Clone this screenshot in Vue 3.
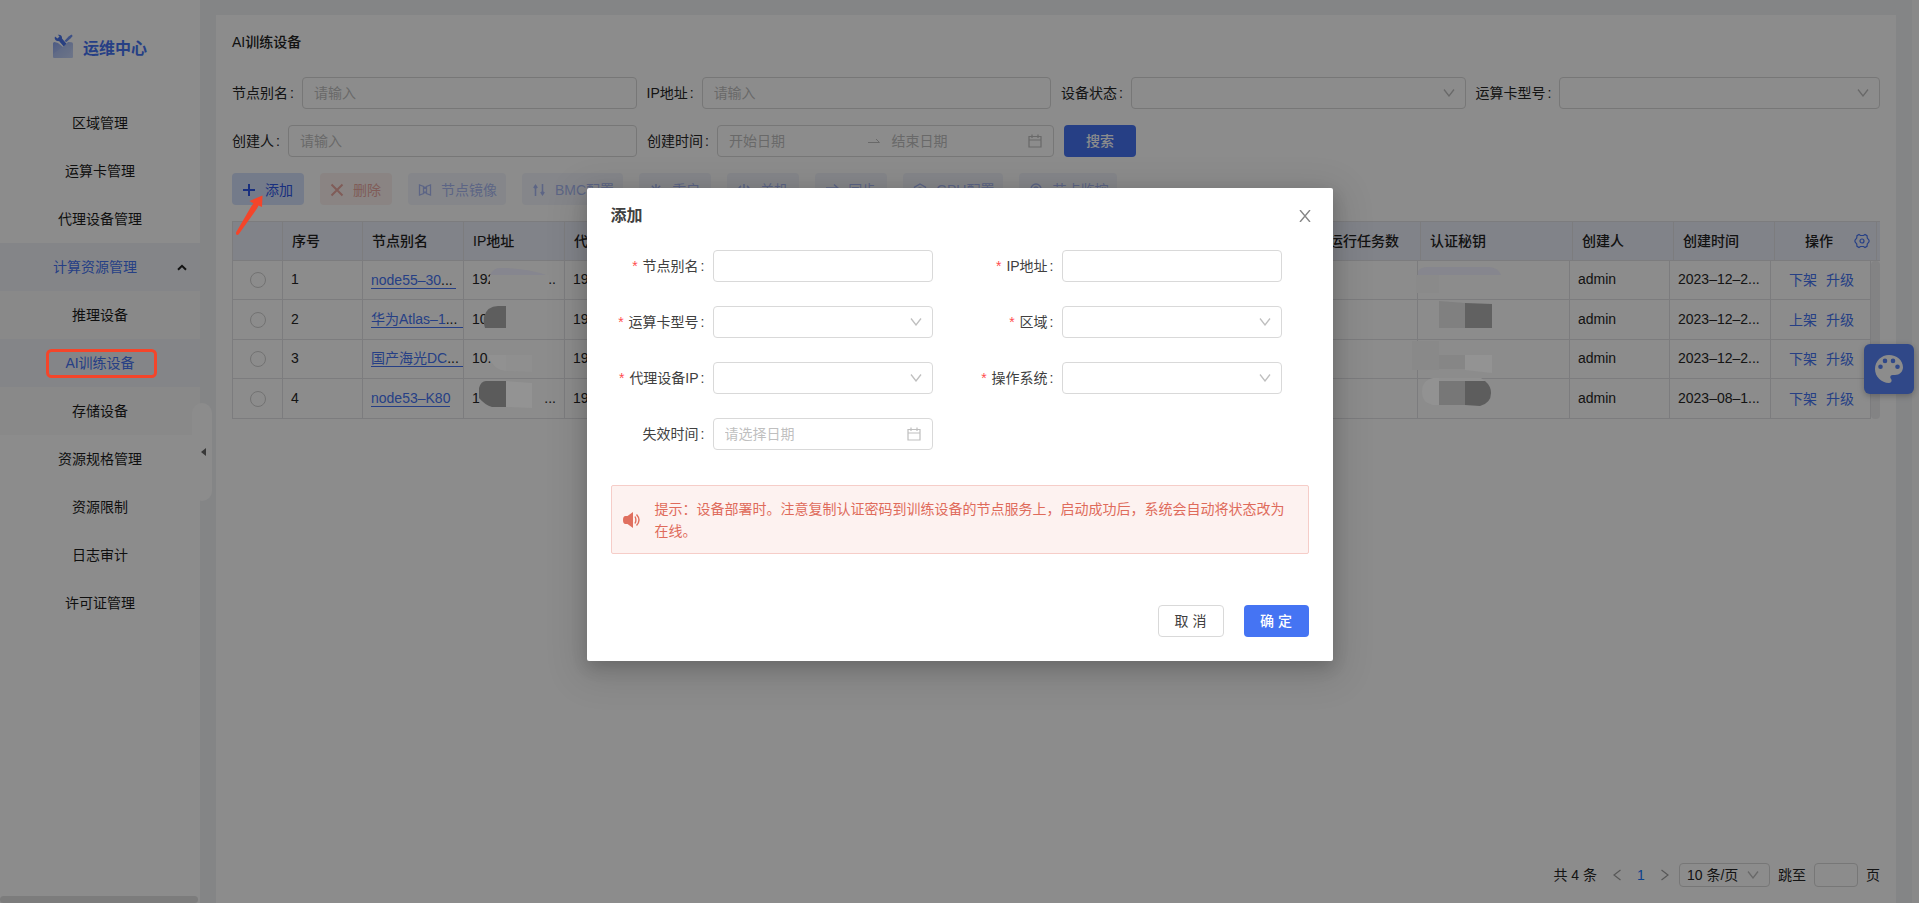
<script setup>
const menu = [
  { label: '区域管理' },
  { label: '运算卡管理' },
  { label: '代理设备管理' },
  { label: '计算资源管理', kind: 'parent' },
  { label: '推理设备', kind: 'child' },
  { label: 'AI训练设备', kind: 'child active' },
  { label: '存储设备', kind: 'child' },
  { label: '资源规格管理' },
  { label: '资源限制' },
  { label: '日志审计' },
  { label: '许可证管理' },
]

const actions = [
  { label: '添加', kind: 'add', d: 'M7 1v12M1 7h12', w: 2 },
  { label: '删除', kind: 'del', d: 'M1.5 1.5l11 11M12.5 1.5l-11 11', w: 2 },
  { label: '节点镜像', kind: 'off', d: 'M1.500 2v10l4-1.500v-7zM12.500 2v10l-4-1.500v-7zM5.500 3.500L7 5l1.500-1.500M5.500 10.500L7 9l1.500 1.500', w: 1.3 },
  { label: 'BMC配置', kind: 'off', d: 'M3.500 2v11M1.800 5l1.700-2.500L5.200 5M10.500 1v11M8.800 9l1.700 2.500L12.200 9', w: 1.6 },
  { label: '重启', kind: 'off', d: 'M7 1v12M1 7h12M2.800 2.800l8.400 8.400M11.200 2.800l-8.400 8.400', w: 1.5 },
  { label: '关机', kind: 'off', d: 'M7 1v6M4 3a5.500 5.500 0 1 0 6 0', w: 1.5 },
  { label: '同步', kind: 'off', d: 'M1 5h12l-4-3.500M13 9H1l4 3.500', w: 1.5 },
  { label: 'GPU配置', kind: 'off', d: 'M7 1l5.500 3.200v5.600L7 13l-5.500-3.200V4.200zM7 5a2 2 0 1 0 0 4 2 2 0 0 0 0-4', w: 1.4 },
  { label: '节点监控', kind: 'off', d: 'M7 1a5 5 0 1 0 0 10A5 5 0 0 0 7 1zM7 4a2 2 0 1 0 0 4 2 2 0 0 0 0-4M3 13h8', w: 1.4 },
]

const rows = [
  { no: 1, name: 'node55–30', dots: '...', fill: false, ip: '192', tail: '..', tasks: '', time: '2023–12–2...', op: '下架' },
  { no: 2, name: '华为Atlas–1', dots: '...', fill: true, ip: '10', tail: '', tasks: '0', time: '2023–12–2...', op: '上架' },
  { no: 3, name: '国产海光DC', dots: '...', fill: true, ip: '10.', tail: '', tasks: '0', time: '2023–12–2...', op: '下架' },
  { no: 4, name: 'node53–K80', dots: '', fill: false, ip: '1', tail: '...', tasks: '', time: '2023–08–1...', op: '下架' },
]

const fields = [
  { id: 'f-name', label: '节点别名', type: 'text', required: true },
  { id: 'f-ip', label: 'IP地址', type: 'text', required: true },
  { id: 'f-card', label: '运算卡型号', type: 'select', required: true },
  { id: 'f-area', label: '区域', type: 'select', required: true },
  { id: 'f-proxy', label: '代理设备IP', type: 'select', required: true },
  { id: 'f-os', label: '操作系统', type: 'select', required: true },
  { id: 'f-expire', label: '失效时间', type: 'date', required: false },
]
</script>

<template>
  <div class="app">
    <aside class="side">
      <div class="brand">
        <svg width="20" height="24" viewBox="0 0 20 24">
          <defs>
            <linearGradient id="box" x1="0" y1="0" x2="1" y2="1">
              <stop offset="0" stop-color="#8ba5f0" />
              <stop offset="1" stop-color="#d3def8" />
            </linearGradient>
          </defs>
          <path d="M2 2.500l2.500 2 2-2L4.800.800c2.500-.600 4.700 1.200 4.200 3.800l6 7-3 2.500-6-7C3.500 7.500.800 5.500 2 2.500z" fill="#4a74ec" />
          <path d="M18.500.500l1.200 1.400-2 2.300-4.500 4-1.600-1.500 4-4.200z" fill="#7093f2" />
          <path d="M0 9.500Q0 8 1.500 8L5 9l5 4 5-5 3.500.200Q20 8.500 20 10v12.500q0 1.500-1.500 1.500h-17Q0 24 0 22.500z" fill="url(#box)" />
          <path d="M0 20l10-7 5-3 5 12v.500q0 1.500-1.500 1.500h-17Q0 24 0 22.500z" fill="#b9caf7" opacity=".45" />
        </svg>
        <span>运维中心</span>
      </div>
      <nav class="menu">
        <a v-for="m in menu" :key="m.label" href="#" :class="m.kind">
          {{ m.label }}
          <svg v-if="m.kind === 'parent'" class="caret" width="10" height="7" viewBox="0 0 10 7">
            <path d="M1 5.800L5 1.800l4 4" fill="none" stroke="#222" stroke-width="2" />
          </svg>
        </a>
      </nav>
      <button class="handle" aria-label="收起菜单">
        <svg width="5" height="8" viewBox="0 0 5 8"><path d="M5 0v8L0 4z" fill="#666" /></svg>
      </button>
      <div class="side-scroll"></div>
    </aside>

    <main class="main">
      <section class="card">
        <h1>AI训练设备</h1>
        <form class="filters">
          <div class="row first">
            <div class="item"><label for="s-name">节点别名<b>:</b></label><input id="s-name" class="ctl" placeholder="请输入"></div>
            <div class="item"><label for="s-ip">IP地址<b>:</b></label><input id="s-ip" class="ctl" placeholder="请输入"></div>
            <div class="item">
              <label for="s-state">设备状态<b>:</b></label>
              <div class="pick">
                <select id="s-state" class="ctl"></select>
                <svg class="chev" width="12" height="8" viewBox="0 0 12 8"><path d="M1 .500l5 6.500 5-6.500" /></svg>
              </div>
            </div>
            <div class="item">
              <label for="s-card">运算卡型号<b>:</b></label>
              <div class="pick">
                <select id="s-card" class="ctl"></select>
                <svg class="chev" width="12" height="8" viewBox="0 0 12 8"><path d="M1 .500l5 6.500 5-6.500" /></svg>
              </div>
            </div>
          </div>
          <div class="row second">
            <div class="item"><label for="s-user">创建人<b>:</b></label><input id="s-user" class="ctl" placeholder="请输入"></div>
            <div class="item">
              <label for="s-from">创建时间<b>:</b></label>
              <div class="ctl range">
                <input id="s-from" placeholder="开始日期">
                <svg class="to" width="12" height="6" viewBox="0 0 12 6"><path d="M0 4.500h11.500L8 1" /></svg>
                <input aria-label="结束日期" placeholder="结束日期">
                <svg class="cal" width="14" height="14" viewBox="0 0 14 14"><path d="M1 2.500h12v10.500H1zM1 6h12M4 .500v3.500M10 .500v3.500" /></svg>
              </div>
            </div>
            <button type="button" class="search">搜索</button>
          </div>
        </form>

        <div class="actions">
          <button v-for="a in actions" :key="a.label" :class="a.kind">
            <svg width="14" height="14" viewBox="0 0 14 14">
              <path :d="a.d" fill="none" stroke="currentColor" :stroke-width="a.w" />
            </svg>
            <span>{{ a.label }}</span>
          </button>
        </div>

        <div class="grid">
          <table class="head">
            <colgroup>
              <col class="c51"><col class="c80"><col class="c101"><col class="c101"><col><col class="c101">
              <col class="c152"><col class="c101"><col class="c101"><col class="c102"><col class="c3">
            </colgroup>
            <thead>
              <tr>
                <th></th><th>序号</th><th>节点别名</th><th>IP地址</th><th>代理设备IP</th><th>运行任务数</th>
                <th>认证秘钥</th><th>创建人</th><th>创建时间</th>
                <th>
                  <div class="ophead">
                    操作
                    <svg width="16" height="16" viewBox="0 0 16 16" fill="none" stroke="#4574f3" stroke-width="1.200">
                      <path d="M5 1.500l1.500 1h3l1.500-1 2 1.200.300 2.300L15 7.200v1.600L13.300 11l-.300 2.300-2 1.200-1.500-1h-3l-1.500 1-2-1.200L2.700 11 1 8.800V7.200L2.700 5 3 2.700z" />
                      <circle cx="8" cy="8" r="2" />
                    </svg>
                  </div>
                </th>
                <th></th>
              </tr>
            </thead>
          </table>
          <div class="bodywrap">
            <table class="body">
              <colgroup>
                <col class="c51"><col class="c80"><col class="c101"><col class="c101"><col><col class="c101">
                <col class="c152"><col class="c100"><col class="c101"><col class="c100">
              </colgroup>
              <tbody>
                <tr v-for="r in rows" :key="r.no">
                  <td class="mid"><input type="radio" name="row" :aria-label="'选择 ' + r.no"></td>
                  <td>{{ r.no }}</td>
                  <td class="namecell"><a href="#" :class="{ fill: r.fill, cut: r.dots && !r.fill }">{{ r.name }}<i>{{ r.dots }}</i></a></td>
                  <td><div class="ip"><span>{{ r.ip }}</span><span>{{ r.tail }}</span></div></td>
                  <td>192</td>
                  <td>{{ r.tasks }}</td>
                  <td></td>
                  <td>admin</td>
                  <td>{{ r.time }}</td>
                  <td class="opcell"><div class="ops"><a href="#">{{ r.op }}</a><a href="#">升级</a></div></td>
                </tr>
              </tbody>
            </table>
            <div class="track"></div>
          </div>
        </div>

        <div class="pager">
          <span>共 4 条</span>
          <button class="nav prev" aria-label="上一页"><svg width="8" height="12" viewBox="0 0 8 12"><path d="M7.500 1L1 6l6.500 5" /></svg></button>
          <button class="cur">1</button>
          <button class="nav" aria-label="下一页"><svg width="8" height="12" viewBox="0 0 8 12"><path d="M.500 1L7 6 .500 11" /></svg></button>
          <div class="pick size">
            <select aria-label="每页条数"><option>10 条/页</option></select>
            <svg class="chev" width="12" height="8" viewBox="0 0 12 8"><path d="M1 .500l5 6.500 5-6.500" /></svg>
          </div>
          <label for="jump">跳至</label>
          <input id="jump">
          <span>页</span>
        </div>
      </section>
      <div class="gutter"></div>
    </main>

    <button class="theme" aria-label="主题">
      <svg width="28" height="28" viewBox="0 0 28 28">
        <path fill="#fff" fill-rule="evenodd" d="M14 0C6.300 0 0 6.300 0 14s6.300 13.800 14 14c1.600 0 2.600-1.200 2.600-2.500 0-.700-.300-1.200-.700-1.700-.400-.500-.600-1-.600-1.600 0-1.300 1-2.200 2.300-2.200H20c4.500 0 8-3.200 8-7.700C28 5.400 21.700 0 14 0zM5.500 14a2.300 2.300 0 1 1 0-4.600 2.300 2.300 0 0 1 0 4.600zM10 8.200a2.300 2.300 0 1 1 0-4.600 2.300 2.300 0 0 1 0 4.600zM18 8.200a2.300 2.300 0 1 1 0-4.600 2.300 2.300 0 0 1 0 4.600zM22.500 14a2.300 2.300 0 1 1 0-4.600 2.300 2.300 0 0 1 0 4.600z" />
      </svg>
    </button>

    <div class="mask">
      <div class="modal" role="dialog" aria-labelledby="dlg-title">
        <header>
          <h2 id="dlg-title">添加</h2>
          <button class="close" aria-label="关闭">
            <svg width="12" height="12" viewBox="0 0 12 12"><path d="M1 0l10 12M11 0L1 12" fill="none" stroke="#868686" stroke-width="1.400" /></svg>
          </button>
        </header>
        <form class="form">
          <div v-for="f in fields" :key="f.id" class="field">
            <label :for="f.id"><em v-if="f.required">*</em>{{ f.label }}<b>:</b></label>
            <input v-if="f.type === 'text'" :id="f.id" class="ctl">
            <div v-else-if="f.type === 'select'" class="pick">
              <select :id="f.id" class="ctl"></select>
              <svg class="chev" width="12" height="8" viewBox="0 0 12 8"><path d="M1 .500l5 6.500 5-6.500" /></svg>
            </div>
            <div v-else class="ctl range">
              <input :id="f.id" placeholder="请选择日期">
              <svg class="cal" width="14" height="14" viewBox="0 0 14 14"><path d="M1 2.500h12v10.500H1zM1 6h12M4 .500v3.500M10 .500v3.500" /></svg>
            </div>
          </div>
        </form>
        <div class="alert">
          <svg width="18" height="16" viewBox="0 0 18 16">
            <path d="M10 0v16L4.500 12H2.500Q0 12 0 8t2.500-4h2z" fill="#e0705f" />
            <path d="M12 4.500q1.800 3.500 0 7M13.500 2.500q5 5.500 0 11" fill="none" stroke="#e0705f" stroke-width="1.400" />
          </svg>
          <p>提示：设备部署时。注意复制认证密码到训练设备的节点服务上，启动成功后，系统会自动将状态改为在线。</p>
        </div>
        <footer>
          <button class="cancel">取 消</button>
          <button class="ok">确 定</button>
        </footer>
      </div>
    </div>

    <svg class="marks left" width="580" height="420" viewBox="0 0 580 420">
      <rect x="47.500" y="350.500" width="108" height="26" rx="4" fill="none" stroke="#f4452a" stroke-width="3" />
      <path d="M236 232.500l15.500-26.500 2-2.500-4-2.500 13-5.500-.500 11.500-3.500-1.500-1.500 3-18.500 26q-1.500 1-2.500-.500z" fill="#f4452a" />
      <rect x="490" y="275" width="59" height="15" fill="#8c8c8c" />
      <path d="M490 275c2-4 5-7 10-7 14 0 32 2 46 7z" fill="#86868f" />
      <path d="M506 306v22h-21q-2-5-1-11 3-11 14-11z" fill="#5e5e5e" />
      <path d="M488 355h18v16q-13-1-18-16z" fill="#919191" />
      <path d="M506 355h26v17l-26-1z" fill="#8f8f8f" />
      <path d="M506 381v26h-14q-7-2-13-9v-10q2-7 7-7z" fill="#5b5b5b" />
      <path d="M506 381l26 2v25l-26-1z" fill="#939393" />
    </svg>
    <svg class="marks right" width="519" height="420" viewBox="1400 0 519 420">
      <path d="M1418 275v-4q3-4 10-4h62q8 1 11 8z" fill="#86868e" />
      <rect x="1416" y="275" width="23" height="18" fill="#8a8a8a" />
      <path d="M1439 301l26 2v25h-26z" fill="#808080" />
      <path d="M1465 303l27 1v24h-27z" fill="#616161" />
      <rect x="1412" y="341" width="27" height="29" fill="#898989" />
      <rect x="1439" y="355" width="26" height="14" fill="#868686" />
      <path d="M1465 355h27v18l-27-3z" fill="#939393" />
      <path d="M1439 378v27h-6q-11-2-11-13 0-12 11-14z" fill="#929292" />
      <path d="M1439 378h42l4 3h-46z" fill="#909090" />
      <rect x="1439" y="381" width="26" height="24" fill="#777" />
      <path d="M1465 381h20q6 5 6 12 0 10-11 13l-15-1z" fill="#5d5d5d" />
    </svg>
  </div>
</template>

<style>
html, body { margin: 0; overflow: hidden; }
</style>

<style scoped>
.app, .app *, .app *::before { box-sizing: border-box; }
.app {
  position: relative;
  display: flex;
  height: 100vh;
  overflow: hidden;
  background: #f0f2f5;
  color: #262626;
  font: 14px/22px "Liberation Sans", Arial, "Noto Sans CJK SC", sans-serif;
}
button, input, select { font: inherit; color: inherit; margin: 0; }
button { border: 0; background: none; padding: 0; }
a { color: #4574f3; text-decoration: none; }

.side { position: relative; flex: none; width: 200px; background: #fff; }
.brand { display: flex; align-items: center; gap: 10px; height: 99px; padding: 0 0 7px 53px; color: #4574f3; font-size: 16px; font-weight: 700; }
.brand span { margin-top: 5px; }
.menu a { position: relative; display: flex; align-items: center; justify-content: center; height: 48px; color: #1c1c1c; }
.menu a.child { background: #fafafa; }
.menu a.parent { background: #f0f3f8; color: #4574f3; padding-right: 10px; }
.menu a.active { background: #f0f2f8; color: #4574f3; }
.caret { position: absolute; right: 13px; top: 21px; }
.handle { position: absolute; left: 192px; top: 403px; width: 20px; height: 98px; padding-left: 3px; border-radius: 10px; background: #fff; display: flex; align-items: center; justify-content: center; }
.side-scroll { position: absolute; left: 0; right: 2px; bottom: 0; height: 7px; border-radius: 4px; background: #e2e2e2; }

.main { flex: 1; min-width: 0; display: flex; padding: 15px 0 0 16px; }
.gutter { flex: none; width: 7px; margin: -15px 0 0 16px; background: #fafafa; }
.card { flex: 1; min-width: 0; display: flex; flex-direction: column; padding: 16px; background: #fff; }
h1 { margin: 0; font-size: 14px; line-height: 22px; font-weight: 500; color: #222; }
.filters { margin-top: 24px; display: grid; gap: 16px; }
.row { display: grid; gap: 10px; }
.first { grid-template-columns: repeat(4, 1fr); }
.second { grid-template-columns: 405fr 407fr 816fr; }
.item { display: flex; align-items: center; min-width: 0; }
.item label { flex: none; white-space: nowrap; }
label b { margin: 0 8px 0 2px; font-weight: 400; }
.ctl { flex: 1; width: 100%; min-width: 0; height: 32px; padding: 0 11px; border: 1px solid #d9d9d9; border-radius: 4px; background: #fff; outline: 0; }
.app ::placeholder { color: #bfbfbf; opacity: 1; }
select { appearance: none; }
.pick { position: relative; flex: 1; min-width: 0; display: flex; }
.chev { position: absolute; right: 11px; top: 12px; fill: none; stroke: #bfbfbf; stroke-width: 1.3; }
.range { display: flex; align-items: center; }
.range input { flex: 1; width: 0; min-width: 0; border: 0; padding: 0; outline: 0; background: none; }
.to { flex: none; margin: 0 11px 0 3px; fill: none; stroke: #bfbfbf; }
.cal { flex: none; fill: none; stroke: #bfbfbf; stroke-width: 1.2; }
.search { justify-self: start; width: 72px; height: 32px; border-radius: 4px; background: #4574f3; color: #fff; font-weight: 500; }

.actions { display: flex; gap: 16px; margin-top: 16px; }
.actions button { display: flex; align-items: center; gap: 9px; min-width: 72px; height: 32px; padding: 1px 9px 0 10px; border-radius: 4px; white-space: nowrap; }
.actions .add { background: #d4e0fb; color: #2f57e8; }
.actions .del { background: #fbf1ef; color: #e9a8a0; }
.actions .off { background: #f3f5fc; color: #a9b9f2; }

.grid { margin-top: 16px; }
table { width: 100%; table-layout: fixed; border-collapse: separate; border-spacing: 0; }
.c51 { width: 51px; }
.c80 { width: 80px; }
.c100 { width: 100px; }
.c101 { width: 101px; }
.c102 { width: 102px; }
.c152 { width: 152px; }
.c3 { width: 3px; }
th, td { padding: 0 0 0 8px; border-right: 1px solid #e2e2e6; border-bottom: 1px solid #e2e2e6; text-align: left; white-space: nowrap; overflow: hidden; }
th:first-child, td:first-child { border-left: 1px solid #e2e2e6; padding: 0; }
th { height: 40px; padding-left: 9px; border-top: 1px solid #e2e2e6; background: #eceef9; font-weight: 500; color: #222; }
th:last-child { padding: 0; border-right: 0; }
.ophead { display: flex; align-items: center; gap: 21px; padding-left: 21px; }
.bodywrap { display: flex; }
.body { flex: 1; min-width: 0; }
.body tr { height: 39px; }
.body tr:nth-child(even) { height: 40px; }
td { padding-bottom: 2px; }
td.opcell { padding-bottom: 0; }
td.mid { text-align: center; line-height: 0; }
.mid input { appearance: none; width: 16px; height: 16px; border: 1px solid #d0d0d0; border-radius: 50%; background: #fff; vertical-align: middle; }
td.namecell { line-height: 16px; padding-bottom: 0; }
.namecell a { display: inline-block; border-bottom: 1px solid #4574f3; vertical-align: middle; line-height: 15px; }
.namecell .cut { padding-right: 3px; }
.namecell .fill { display: block; }
.namecell i { font-style: normal; color: #222; }
.ip { display: flex; justify-content: space-between; padding-right: 8px; }
.ops { display: flex; gap: 9px; padding-left: 10px; }
.track { flex: none; width: 9px; border-radius: 4px; background: #efeff1; }

.pager { margin-top: auto; display: flex; align-items: center; justify-content: flex-end; height: 24px; }
.nav { width: 24px; height: 24px; display: grid; place-items: center; }
.nav svg { fill: none; stroke: #a0a0a0; stroke-width: 1.2; }
.prev { margin-left: 8px; }
.cur { width: 24px; color: #1677ff; }
.size { flex: none; margin-left: 2px; }
.size select { width: 91px; height: 24px; padding: 0 8px 0 7px; border: 1px solid #d9d9d9; border-radius: 4px; background: #fff; line-height: 22px; }
.size .chev { top: 8px; }
.pager label { margin: 0 8px; }
#jump { width: 44px; height: 24px; margin-right: 8px; border: 1px solid #d9d9d9; border-radius: 4px; background: #fff; padding: 0 8px; }

.theme { position: absolute; right: 5px; top: 344px; width: 50px; height: 50px; border-radius: 6px; background: #5884f8; display: grid; place-items: center; box-shadow: 0 2px 6px rgba(0, 0, 0, .25); }

.mask { position: absolute; inset: 0; display: flex; align-items: flex-start; justify-content: center; padding-top: 188px; background: rgba(0, 0, 0, .45); }
.modal { width: 746px; padding: 16px 24px 24px; border-radius: 2px; background: #fff; color: #404040; box-shadow: 0 6px 16px rgba(0, 0, 0, .16), 0 9px 36px 8px rgba(0, 0, 0, .12); }
.modal header { display: flex; align-items: center; justify-content: space-between; height: 24px; }
h2 { margin: 0; font-size: 16px; line-height: 24px; font-weight: 700; color: #404040; }
.close { width: 20px; height: 20px; margin-right: -6px; display: grid; place-items: center; }
.form { display: grid; grid-template-columns: 1fr 1fr; row-gap: 24px; margin-top: 22px; }
.field { display: flex; align-items: center; padding-right: 27px; }
.field label { flex: none; width: 102px; text-align: right; white-space: nowrap; }
.field em { font-style: normal; color: #ff4d4f; margin-right: 5px; }
.alert { display: flex; align-items: center; gap: 14px; margin-top: 35px; padding: 12px 16px 11px 11px; border: 1px solid #f6cdc8; border-radius: 2px; background: #fdf2f0; color: #df6b5b; }
.alert svg { flex: none; }
.alert p { margin: 0; }
.modal footer { display: flex; justify-content: flex-end; gap: 20px; margin-top: 51px; }
.modal footer button { width: 66px; height: 32px; border-radius: 4px; }
.cancel { border: 1px solid #d9d9d9; background: #fff; }
.modal footer .ok { width: 65px; background: #4574f3; color: #fff; font-weight: 500; }

.marks { position: absolute; top: 0; pointer-events: none; }
.left { left: 0; }
.right { right: 0; }
</style>
